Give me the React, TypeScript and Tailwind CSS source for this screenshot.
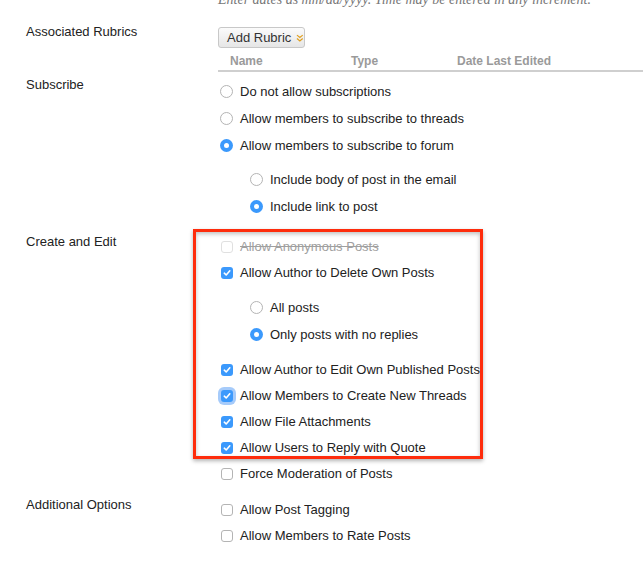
import React from 'react';

type Opt = { label: string; checked?: boolean; disabled?: boolean; focus?: boolean };

const Check = ({ checked, disabled, focus }: Opt) => (
  <span
    className={`ml-[3px] flex h-[12px] w-[12px] items-center justify-center rounded-[3px] ${
      checked
        ? 'bg-[#3b99fc]'
        : disabled
        ? 'border border-[#e0e0e0] bg-white'
        : 'border border-[#b4b4b4] bg-white'
    } ${focus ? 'shadow-[0_0_0_3px_rgba(92,160,245,0.55)]' : ''}`}
  >
    {checked && (
      <svg width="8" height="8" viewBox="0 0 8 8">
        <path d="M1.3 4.2 L3.2 6 L6.8 1.8" fill="none" stroke="white" strokeWidth="1.6" strokeLinecap="round" strokeLinejoin="round" />
      </svg>
    )}
  </span>
);

const Radio = ({ checked }: { checked?: boolean }) => (
  <span
    className={`ml-[2px] flex h-[13px] w-[13px] items-center justify-center rounded-full ${
      checked ? 'bg-[#3b99fc]' : 'border border-[#b4b4b4] bg-white'
    }`}
  >
    {checked && <span className="h-[5px] w-[5px] rounded-full bg-white" />}
  </span>
);

const CheckRow = (o: Opt) => (
  <div className="flex h-[26px] items-center">
    <div className="w-[22px]">
      <Check {...o} />
    </div>
    <span className={o.disabled ? 'text-[#a0a0a0] line-through' : ''}>{o.label}</span>
  </div>
);

const RadioRow = ({ label, checked }: { label: string; checked?: boolean }) => (
  <div className="flex h-[27px] items-center">
    <div className="w-[22px]">
      <Radio checked={checked} />
    </div>
    <span>{label}</span>
  </div>
);

const Label = ({ text, pt }: { text: string; pt: string }) => (
  <div className={`w-[218px] shrink-0 pl-[26px] leading-[14px] ${pt}`}>{text}</div>
);

export default function App() {
  return (
    <div
      className="h-[566px] w-[643px] overflow-hidden bg-white text-[13px] text-[#222]"
      style={{ fontFamily: '"Liberation Sans", Arial, sans-serif' }}
    >
      <div
        className="mt-[-11px] h-[16px] whitespace-nowrap pl-[218px] text-[14px] italic text-[#777]"
        style={{ fontFamily: '"Liberation Serif", "Times New Roman", serif' }}
      >
        Enter dates as mm/dd/yyyy. Time may be entered in any increment.
      </div>

      {/* Associated Rubrics */}
      <div className="mt-[15px] flex">
        <Label text="Associated Rubrics" pt="pt-[5px]" />
        <div className="flex-1">
          <button className="mt-[7px] flex h-[21px] w-[87px] items-center whitespace-nowrap rounded-[3px] border border-[#c8c8c8] bg-gradient-to-b from-[#fbfbfb] to-[#e6e6e6] pl-[8px] text-[13px] text-[#333]">
            Add Rubric
            <svg className="ml-[5px]" width="8" height="8" viewBox="0 0 8 8">
              <path d="M1 1 L4 3.5 L7 1 M1 4.5 L4 7 L7 4.5" fill="none" stroke="#e0a020" strokeWidth="1.3" />
            </svg>
          </button>
          <div className="mt-[4px] flex h-[20px] items-center border-b-2 border-[#cfcfcf] text-[12px] font-bold text-[#9a9a9a]">
            <span className="ml-[12px] w-[121px]">Name</span>
            <span className="w-[106px]">Type</span>
            <span>Date Last Edited</span>
          </div>
        </div>
      </div>

      {/* Subscribe */}
      <div className="mt-[6px] flex">
        <Label text="Subscribe" pt="pt-[0px]" />
        <div className="flex-1">
          <RadioRow label="Do not allow subscriptions" />
          <RadioRow label="Allow members to subscribe to threads" />
          <RadioRow label="Allow members to subscribe to forum" checked />
          <div className="mt-[7px] pl-[30px]">
            <RadioRow label="Include body of post in the email" />
            <RadioRow label="Include link to post" checked />
          </div>
        </div>
      </div>

      {/* Create and Edit */}
      <div className="mt-[14px] flex">
        <Label text="Create and Edit" pt="pt-[1px]" />
        <div className="relative flex-1">
          <CheckRow label="Allow Anonymous Posts" disabled />
          <CheckRow label="Allow Author to Delete Own Posts" checked />
          <div className="mt-[8px] pl-[30px]">
            <RadioRow label="All posts" />
            <RadioRow label="Only posts with no replies" checked />
          </div>
          <div className="mt-[9px]">
            <CheckRow label="Allow Author to Edit Own Published Posts" checked />
            <CheckRow label="Allow Members to Create New Threads" checked focus />
            <CheckRow label="Allow File Attachments" checked />
            <CheckRow label="Allow Users to Reply with Quote" checked />
            <CheckRow label="Force Moderation of Posts" />
          </div>
          <div className="pointer-events-none absolute left-[-25px] top-[-5px] h-[230px] w-[290px] border-[3px] border-[#fe2c0c] shadow-[0_2px_4px_rgba(0,0,0,0.3),inset_0_2px_4px_rgba(0,0,0,0.25)]" />
        </div>
      </div>

      {/* Additional Options */}
      <div className="mt-[10px] flex">
        <Label text="Additional Options" pt="pt-[1px]" />
        <div className="flex-1">
          <CheckRow label="Allow Post Tagging" />
          <CheckRow label="Allow Members to Rate Posts" />
        </div>
      </div>
    </div>
  );
}
